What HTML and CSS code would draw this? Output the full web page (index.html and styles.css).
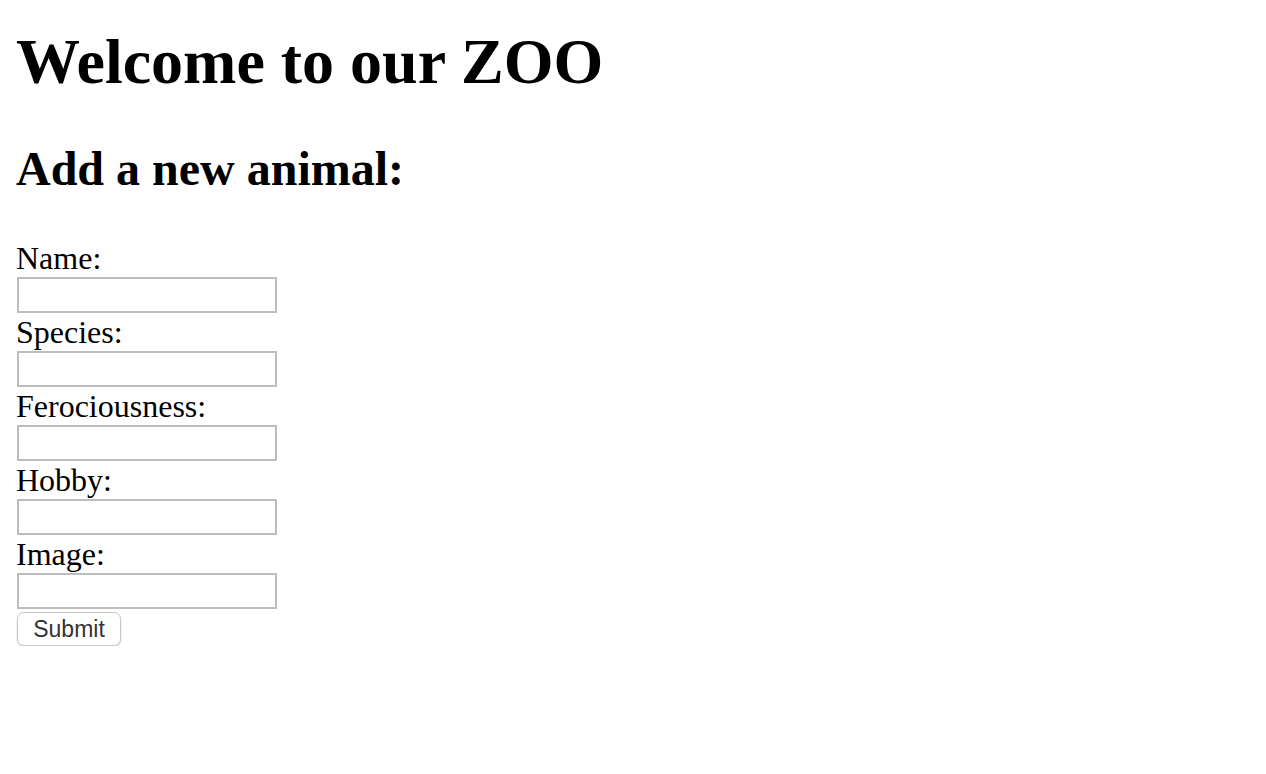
FILE: index.html
```html
<!DOCTYPE html>
<html>
<head>
<meta charset="utf-8">
<title>Zoo</title>
<link rel="stylesheet" href="styles.css">
</head>
<body>
<h1 class="title">Welcome to our ZOO</h1>
<h2 class="subtitle">Add a new animal:</h2>
<form class="animal-form">
  <label class="field-label" for="name">Name:</label>
  <input class="field-input" id="name" type="text">
  <label class="field-label" for="species">Species:</label>
  <input class="field-input" id="species" type="text">
  <label class="field-label" for="ferocity">Ferociousness:</label>
  <input class="field-input" id="ferocity" type="text">
  <label class="field-label" for="hobby">Hobby:</label>
  <input class="field-input" id="hobby" type="text">
  <label class="field-label" for="image">Image:</label>
  <input class="field-input" id="image" type="text">
  <button class="submit-btn" type="submit">Submit</button>
</form>
</body>
</html>
```
FILE: styles.css
```css
html, body {
  margin: 0;
  padding: 0;
  background: #fff;
}
body {
  padding: 0 16px;
  font-family: "Liberation Serif", "Times New Roman", serif;
  color: #000;
}
.title {
  font-size: 64px;
  line-height: 74px;
  font-weight: bold;
  margin: 25px 0 0 0;
}
.subtitle {
  font-size: 48px;
  line-height: 56px;
  font-weight: bold;
  margin: 42px 0 0 0;
}
.animal-form {
  display: flex;
  flex-direction: column;
  align-items: flex-start;
  margin-top: 42px;
}
.field-label {
  font-size: 32px;
  line-height: 38px;
  display: block;
}
.field-input {
  display: block;
  box-sizing: border-box;
  width: 260px;
  height: 36px;
  margin: 0 0 0 1px;
  border: 2px solid #bdbdbd;
  background: #fff;
  padding: 2px 4px;
  font-size: 26px;
}
.submit-btn {
  margin: 3px 0 0 1px;
  box-sizing: border-box;
  width: 104px;
  height: 34px;
  border: 1px solid #c8c8c8;
  border-radius: 7px;
  background: #fff;
  box-shadow: 0 1px 2px rgba(0,0,0,0.15);
  font-family: "Liberation Sans", Arial, sans-serif;
  font-size: 23px;
  color: #333;
  padding: 0;
}
```
